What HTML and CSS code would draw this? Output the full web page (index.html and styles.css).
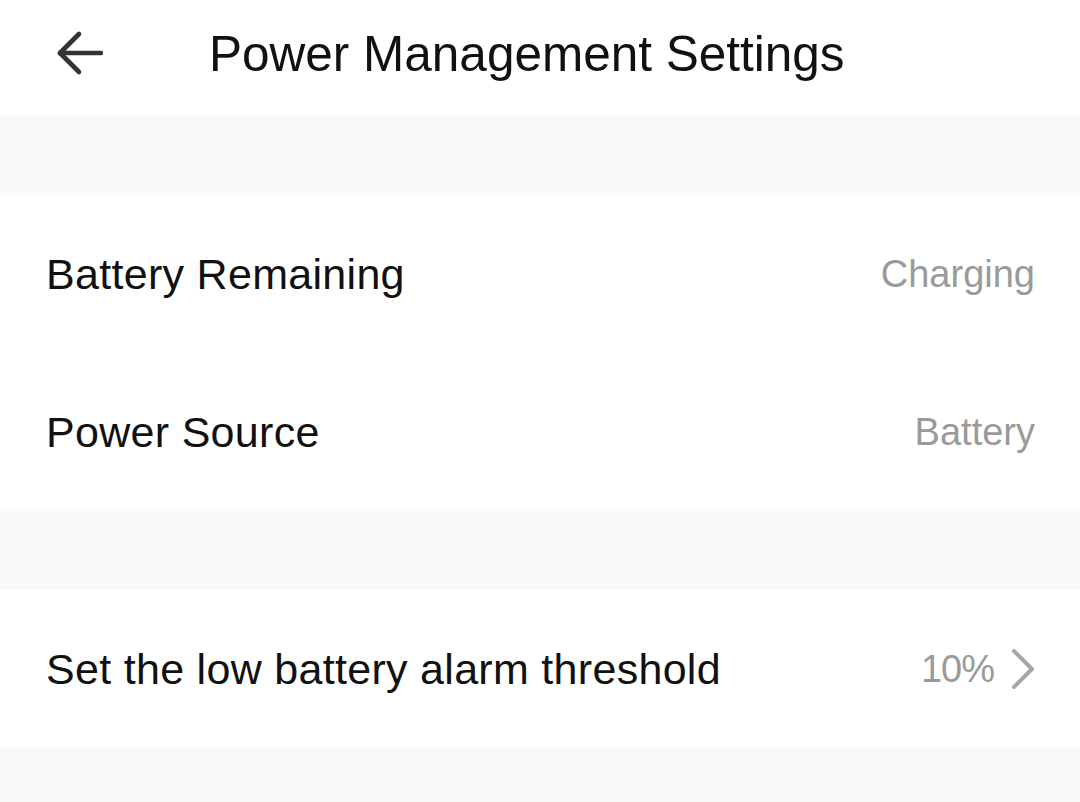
FILE: index.html
```html
<!DOCTYPE html>
<html lang="en">
<head>
<meta charset="utf-8">
<title>Power Management Settings</title>
<link rel="stylesheet" href="styles.css">
</head>
<body>
<div class="page">
  <header class="header">
    <button class="back" aria-label="Back">
      <svg width="48" height="46" viewBox="0 0 48 46" fill="none" stroke="#333" stroke-width="4.6" stroke-linecap="round" stroke-linejoin="round">
        <path d="M46 23 H5"/>
        <path d="M24 4 L5 23 L24 42"/>
      </svg>
    </button>
    <h1 class="title">Power Management Settings</h1>
  </header>
  <div class="gap"></div>
  <section class="group">
    <div class="row"><span class="label">Battery Remaining</span><span class="value">Charging</span></div>
    <div class="row"><span class="label">Power Source</span><span class="value">Battery</span></div>
  </section>
  <div class="gap"></div>
  <section class="group">
    <div class="row link"><span class="label">Set the low battery alarm threshold</span>
      <span class="value-wrap"><span class="value pct">10%</span>
        <svg class="chev" width="24" height="42" viewBox="0 0 24 42" fill="none" stroke="#a6a6a6" stroke-width="4" stroke-linecap="round" stroke-linejoin="round">
          <path d="M3 3 L21 21 L3 39"/>
        </svg>
      </span>
    </div>
  </section>
  <div class="gap fill"></div>
</div>
</body>
</html>
```
FILE: styles.css
```css
html, body {
  margin: 0;
  padding: 0;
  background: #f9f9f9;
}
body {
  font-family: "Liberation Sans", Arial, sans-serif;
  color: #111;
}
.page {
  width: 1080px;
  height: 802px;
  display: flex;
  flex-direction: column;
  overflow: hidden;
}
.header {
  height: 116px;
  box-sizing: border-box;
  padding-bottom: 8px;
  background: #fff;
  display: flex;
  align-items: center;
  flex-shrink: 0;
}
.back {
  background: none;
  border: 0;
  padding: 0;
  margin-left: 55px;
  margin-bottom: 2px;
  width: 48px;
  height: 46px;
  display: flex;
}
.title {
  margin: 0 0 0 106px;
  font-weight: normal;
  font-size: 49.5px;
  letter-spacing: 0;
  color: #111;
  line-height: 1;
}
.gap {
  height: 79px;
  background: #f9f9f9;
  flex-shrink: 0;
}
.gap.fill {
  flex: 1;
}
.group {
  background: #fff;
  flex-shrink: 0;
}
.row {
  height: 158px;
  display: flex;
  align-items: center;
  justify-content: space-between;
  padding: 0 45px 0 46px;
}
.label {
  font-size: 43px;
  letter-spacing: 0.3px;
  color: #111;
}
.value {
  font-size: 38px;
  color: #9a9a9a;
}
.value.pct {
  letter-spacing: -1px;
}
.value-wrap {
  display: flex;
  align-items: center;
  gap: 17px;
}
.chev {
  display: block;
}
```
